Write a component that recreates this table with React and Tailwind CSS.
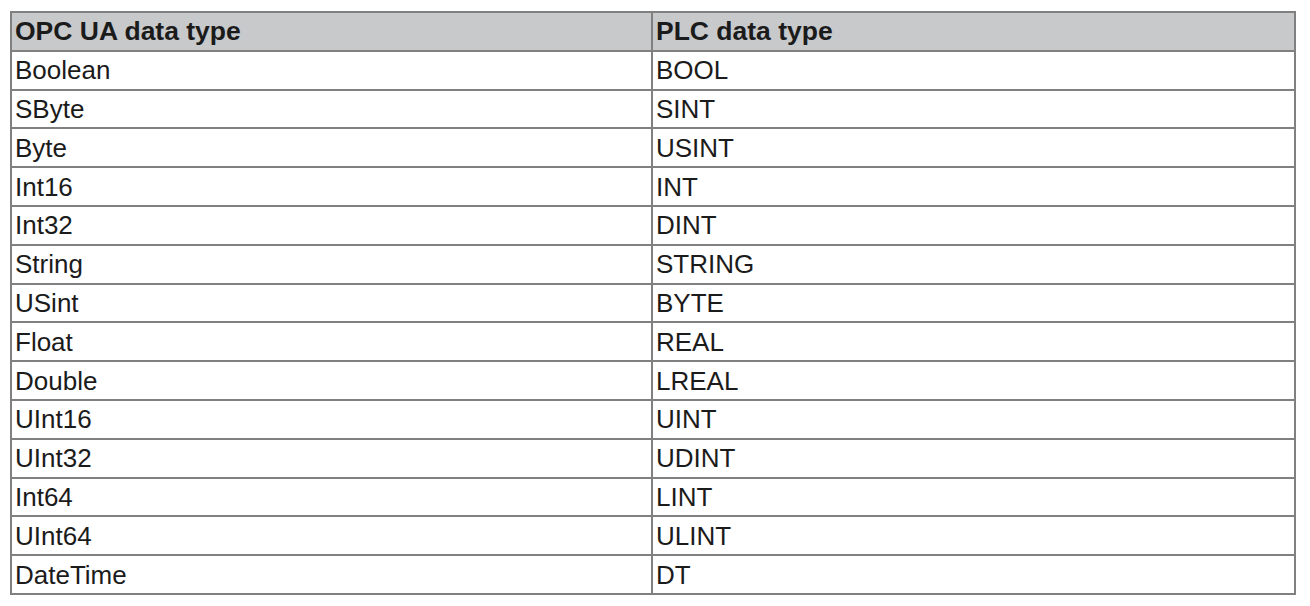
import { Fragment } from "react";

export default function App() {
  const rows = [
    ["Boolean", "BOOL"],
    ["SByte", "SINT"],
    ["Byte", "USINT"],
    ["Int16", "INT"],
    ["Int32", "DINT"],
    ["String", "STRING"],
    ["USint", "BYTE"],
    ["Float", "REAL"],
    ["Double", "LREAL"],
    ["UInt16", "UINT"],
    ["UInt32", "UDINT"],
    ["Int64", "LINT"],
    ["UInt64", "ULINT"],
    ["DateTime", "DT"],
  ];
  return (
    <div className="w-[1310px] h-[606px] bg-white pl-[10px] pt-[11px]" style={{ fontFamily: '"Liberation Sans", Arial, sans-serif' }}>
      <div className="w-[1286px] h-[584px] bg-[#808080] p-[2px] grid grid-cols-[639px_1fr] grid-rows-[repeat(15,minmax(0,1fr))] gap-[2px] text-[26px] text-[#1b1b1b] leading-none">
        <div className="bg-[#c8c9cb] flex items-center pl-[3px] font-bold text-[26.5px]">OPC UA data type</div>
        <div className="bg-[#c8c9cb] flex items-center pl-[3px] font-bold text-[26.5px]">PLC data type</div>
        {rows.map(([a, b]) => (
          <Fragment key={a}>
            <div className="bg-white flex items-center pl-[3px]">{a}</div>
            <div className="bg-white flex items-center pl-[3px]">{b}</div>
          </Fragment>
        ))}
      </div>
    </div>
  );
}
